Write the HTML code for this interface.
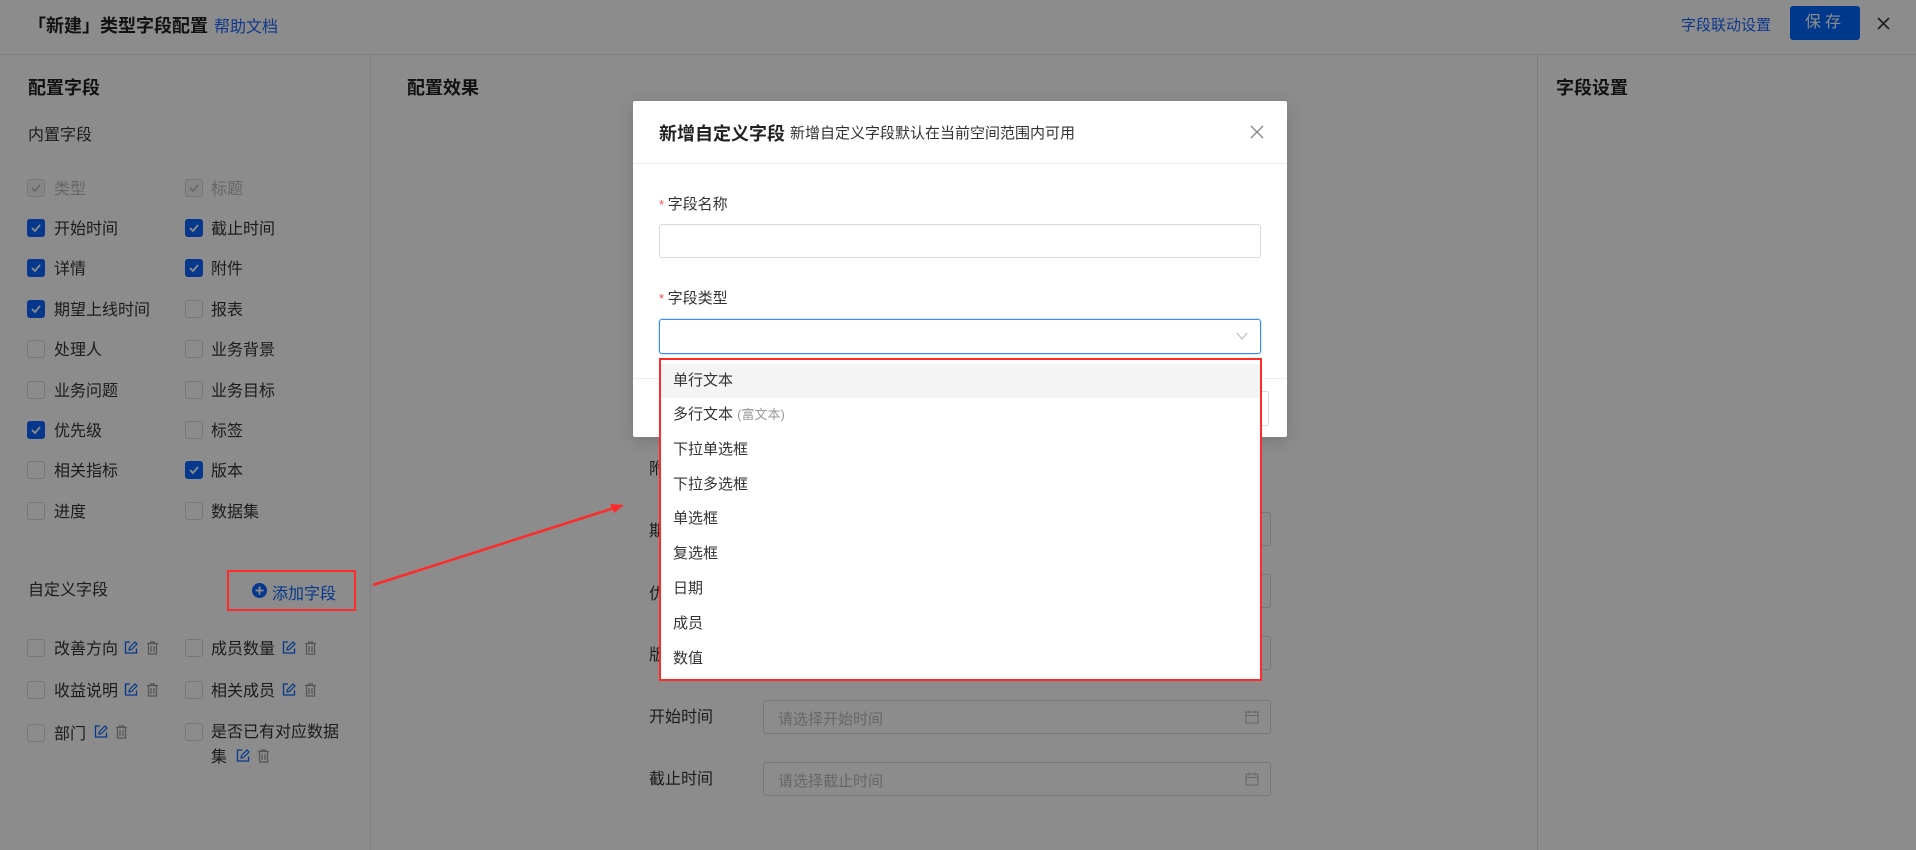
<!DOCTYPE html>
<html><head><meta charset="utf-8">
<style>
*{box-sizing:border-box;margin:0;padding:0}
body{width:1916px;height:850px;overflow:hidden;background:#fff;font-family:"Liberation Sans","Noto Sans CJK SC",sans-serif;color:#333;position:relative}
.a{position:absolute;white-space:nowrap}
.cb{position:absolute;width:18px;height:18px;border:1px solid #d9d9d9;border-radius:3px;background:#fff}
.cb.on{background:#0a66ff;border-color:#0a66ff}
.cb.dis{background:#f5f5f5;border-color:#d9d9d9}
.cb svg{position:absolute;left:2px;top:2px}
.t{position:absolute;font-size:16px;line-height:20px;color:#333;margin-top:2px}
.inp{position:absolute;border:1px solid #d9d9d9;border-radius:3px;background:#fff}
.ph{position:absolute;left:14px;top:7px;font-size:15px;color:#bbb}
.ov{position:absolute;left:0;top:0;width:1916px;height:850px;background:rgba(0,0,0,.45)}
.item{position:absolute;left:12px;font-size:15px;color:#333;line-height:20px}
</style></head><body>
<!-- header -->
<div class="a" style="left:28px;top:12px;font-size:18px;font-weight:bold;color:#222">「新建」类型字段配置</div>
<div class="a" style="left:214px;top:13px;font-size:16px;color:#1a66ff">帮助文档</div>
<div class="a" style="left:1681px;top:14px;font-size:15px;color:#1a66ff">字段联动设置</div>
<div class="a" style="left:1790px;top:6px;width:70px;height:34px;background:#0066ff;border-radius:3px;color:#fff;font-size:16px;text-align:center;line-height:34px;letter-spacing:4px">保存</div>
<svg class="a" style="left:1877px;top:17px" width="13" height="13"><path d="M1 1l11 11M12 1L1 12" stroke="#333" stroke-width="1.6"/></svg>
<div class="a" style="left:0;top:54px;width:1916px;height:1px;background:#e8e8e8"></div>
<div class="a" style="left:370px;top:55px;width:1px;height:795px;background:#e8e8e8"></div>
<div class="a" style="left:1537px;top:55px;width:1px;height:795px;background:#e8e8e8"></div>
<div class="a" style="left:28px;top:74px;font-size:18px;font-weight:bold;color:#222">配置字段</div>
<div class="a" style="left:407px;top:74px;font-size:18px;font-weight:bold;color:#222">配置效果</div>
<div class="a" style="left:1556px;top:74px;font-size:18px;font-weight:bold;color:#222">字段设置</div>
<div class="a" style="left:28px;top:121px;font-size:16px;color:#333">内置字段</div>

<div class="cb dis" style="left:27px;top:179px"><svg width="12" height="12"><path d="M2 6l3 3 5-6" stroke="#bbb" stroke-width="1.6" fill="none"/></svg></div><div class="t" style="left:54px;top:178px;color:#bbb">类型</div>
<div class="cb dis" style="left:185px;top:179px"><svg width="12" height="12"><path d="M2 6l3 3 5-6" stroke="#bbb" stroke-width="1.6" fill="none"/></svg></div><div class="t" style="left:211px;top:178px;color:#bbb">标题</div>

<div class="cb on" style="left:27px;top:219px"><svg width="12" height="12"><path d="M2 6l3 3 5-6" stroke="#fff" stroke-width="1.8" fill="none"/></svg></div><div class="t" style="left:54px;top:218px">开始时间</div>
<div class="cb on" style="left:185px;top:219px"><svg width="12" height="12"><path d="M2 6l3 3 5-6" stroke="#fff" stroke-width="1.8" fill="none"/></svg></div><div class="t" style="left:211px;top:218px">截止时间</div>

<div class="cb on" style="left:27px;top:259px"><svg width="12" height="12"><path d="M2 6l3 3 5-6" stroke="#fff" stroke-width="1.8" fill="none"/></svg></div><div class="t" style="left:54px;top:258px">详情</div>
<div class="cb on" style="left:185px;top:259px"><svg width="12" height="12"><path d="M2 6l3 3 5-6" stroke="#fff" stroke-width="1.8" fill="none"/></svg></div><div class="t" style="left:211px;top:258px">附件</div>

<div class="cb on" style="left:27px;top:300px"><svg width="12" height="12"><path d="M2 6l3 3 5-6" stroke="#fff" stroke-width="1.8" fill="none"/></svg></div><div class="t" style="left:54px;top:299px">期望上线时间</div>
<div class="cb" style="left:185px;top:300px"></div><div class="t" style="left:211px;top:299px">报表</div>

<div class="cb" style="left:27px;top:340px"></div><div class="t" style="left:54px;top:339px">处理人</div>
<div class="cb" style="left:185px;top:340px"></div><div class="t" style="left:211px;top:339px">业务背景</div>

<div class="cb" style="left:27px;top:381px"></div><div class="t" style="left:54px;top:380px">业务问题</div>
<div class="cb" style="left:185px;top:381px"></div><div class="t" style="left:211px;top:380px">业务目标</div>

<div class="cb on" style="left:27px;top:421px"><svg width="12" height="12"><path d="M2 6l3 3 5-6" stroke="#fff" stroke-width="1.8" fill="none"/></svg></div><div class="t" style="left:54px;top:420px">优先级</div>
<div class="cb" style="left:185px;top:421px"></div><div class="t" style="left:211px;top:420px">标签</div>

<div class="cb" style="left:27px;top:461px"></div><div class="t" style="left:54px;top:460px">相关指标</div>
<div class="cb on" style="left:185px;top:461px"><svg width="12" height="12"><path d="M2 6l3 3 5-6" stroke="#fff" stroke-width="1.8" fill="none"/></svg></div><div class="t" style="left:211px;top:460px">版本</div>

<div class="cb" style="left:27px;top:502px"></div><div class="t" style="left:54px;top:501px">进度</div>
<div class="cb" style="left:185px;top:502px"></div><div class="t" style="left:211px;top:501px">数据集</div>

<div class="t" style="left:28px;top:579px">自定义字段</div>
<div class="a" style="left:252px;top:583px;width:15px;height:15px;border-radius:50%;background:#0a66ff"><svg class="a" style="left:3px;top:3px" width="9" height="9"><path d="M4.5 0.5v8M0.5 4.5h8" stroke="#fff" stroke-width="1.8"/></svg></div>
<div class="a" style="left:272px;top:580px;font-size:16px;color:#0a66ff">添加字段</div>

<svg width="0" height="0" style="position:absolute"><defs>
<g id="ed"><path d="M7 2H2.5v11h11V8.5" stroke="#0a66ff" stroke-width="1.3" fill="none"/><path d="M6 10l.5-2.5L12 2l2 2-5.5 5.5z" stroke="#0a66ff" stroke-width="1.2" fill="none"/></g>
<g id="tr"><path d="M2 3.5h11M5.5 3.5V2h4v1.5M3.5 3.5V14h8V3.5M6 6v6M9 6v6" stroke="#999" stroke-width="1.2" fill="none"/></g>
</defs></svg>
<div class="cb" style="left:27px;top:639px"></div><div class="t" style="left:54px;top:638px">改善方向</div>
<svg class="a" style="left:123px;top:640px" width="16" height="16"><use href="#ed"/></svg><svg class="a" style="left:145px;top:640px" width="16" height="16"><use href="#tr"/></svg>
<div class="cb" style="left:185px;top:639px"></div><div class="t" style="left:211px;top:638px">成员数量</div>
<svg class="a" style="left:281px;top:640px" width="16" height="16"><use href="#ed"/></svg><svg class="a" style="left:303px;top:640px" width="16" height="16"><use href="#tr"/></svg>

<div class="cb" style="left:27px;top:681px"></div><div class="t" style="left:54px;top:680px">收益说明</div>
<svg class="a" style="left:123px;top:682px" width="16" height="16"><use href="#ed"/></svg><svg class="a" style="left:145px;top:682px" width="16" height="16"><use href="#tr"/></svg>
<div class="cb" style="left:185px;top:681px"></div><div class="t" style="left:211px;top:680px">相关成员</div>
<svg class="a" style="left:281px;top:682px" width="16" height="16"><use href="#ed"/></svg><svg class="a" style="left:303px;top:682px" width="16" height="16"><use href="#tr"/></svg>

<div class="cb" style="left:27px;top:724px"></div><div class="t" style="left:54px;top:723px">部门</div>
<svg class="a" style="left:93px;top:724px" width="16" height="16"><use href="#ed"/></svg><svg class="a" style="left:114px;top:724px" width="16" height="16"><use href="#tr"/></svg>
<div class="cb" style="left:185px;top:723px"></div><div class="t" style="left:211px;top:721px">是否已有对应数据</div>
<div class="t" style="left:211px;top:746px">集</div>
<svg class="a" style="left:235px;top:748px" width="16" height="16"><use href="#ed"/></svg><svg class="a" style="left:256px;top:748px" width="16" height="16"><use href="#tr"/></svg>

<!-- behind form -->
<div class="t" style="left:649px;top:458px">附件</div>
<div class="t" style="left:649px;top:520px">期望上线时间</div>
<div class="inp" style="left:763px;top:512px;width:508px;height:34px"></div>
<div class="t" style="left:649px;top:583px">优先级</div>
<div class="inp" style="left:763px;top:574px;width:508px;height:34px"></div>
<div class="t" style="left:649px;top:644px">版本</div>
<div class="inp" style="left:763px;top:636px;width:508px;height:34px"></div>
<div class="t" style="left:649px;top:706px">开始时间</div>
<div class="inp" style="left:763px;top:700px;width:508px;height:34px"><div class="ph">请选择开始时间</div><svg class="a" style="left:481px;top:9px" width="14" height="14"><rect x="1" y="2" width="12" height="11" stroke="#bbb" fill="none"/><path d="M1 5.5h12M4 0.5v3M10 0.5v3" stroke="#bbb"/></svg></div>
<div class="t" style="left:649px;top:768px">截止时间</div>
<div class="inp" style="left:763px;top:762px;width:508px;height:34px"><div class="ph">请选择截止时间</div><svg class="a" style="left:481px;top:9px" width="14" height="14"><rect x="1" y="2" width="12" height="11" stroke="#bbb" fill="none"/><path d="M1 5.5h12M4 0.5v3M10 0.5v3" stroke="#bbb"/></svg></div>

<div class="ov"></div>

<!-- red annotations above overlay -->
<div class="a" style="left:227px;top:570px;width:129px;height:41px;border:2px solid #ff2a2a"></div>
<svg class="a" style="left:0;top:0" width="1916" height="850"><path d="M373 585L614 508" stroke="#ff2a2a" stroke-width="2.5"/><path d="M624 505l-14 -1 4 9z" fill="#ff2a2a"/></svg>

<!-- modal -->
<div class="a" style="left:633px;top:101px;width:654px;height:336px;background:#fff;border-radius:2px;box-shadow:0 4px 16px rgba(0,0,0,.15)">
  <div class="a" style="left:26px;top:19px;font-size:18px;font-weight:bold;color:#222">新增自定义字段</div>
  <div class="a" style="left:157px;top:21px;font-size:15px;color:#333">新增自定义字段默认在当前空间范围内可用</div>
  <svg class="a" style="left:617px;top:24px" width="14" height="14"><path d="M1 1l12 12M13 1L1 13" stroke="#888" stroke-width="1.4"/></svg>
  <div class="a" style="left:0;top:62px;width:654px;height:1px;background:#eee"></div>
  <div class="a" style="left:26px;top:92px;font-size:15px;color:#333"><span style="color:#ff4d4f;font-size:13px">* </span>字段名称</div>
  <div class="inp" style="left:26px;top:123px;width:602px;height:34px"></div>
  <div class="a" style="left:26px;top:186px;font-size:15px;color:#333"><span style="color:#ff4d4f;font-size:13px">* </span>字段类型</div>
  <div class="inp" style="left:26px;top:218px;width:602px;height:35px;border-color:#3c8bff;box-shadow:0 0 0 1px rgba(60,139,255,.2)"><svg class="a" style="left:576px;top:12px" width="12" height="9"><path d="M1 1l5 6 5-6" stroke="#bbb" stroke-width="1.2" fill="none"/></svg></div>
  <div class="a" style="left:0;top:277px;width:654px;height:1px;background:#eee"></div>
  <div class="inp" style="left:560px;top:290px;width:76px;height:35px"></div>
</div>

<!-- dropdown -->
<div class="a" style="left:659px;top:358px;width:603px;height:323px;background:#fff;border:2px solid #ff2a2a">
  <div class="a" style="left:0;top:4px;width:599px;height:34px;background:#f4f4f4"></div>
  <div class="item" style="top:11px">单行文本</div>
  <div class="item" style="top:45px">多行文本 <span style="font-size:13px;color:#999">(富文本)</span></div>
  <div class="item" style="top:80px">下拉单选框</div>
  <div class="item" style="top:115px">下拉多选框</div>
  <div class="item" style="top:149px">单选框</div>
  <div class="item" style="top:184px">复选框</div>
  <div class="item" style="top:219px">日期</div>
  <div class="item" style="top:254px">成员</div>
  <div class="item" style="top:289px">数值</div>
</div>
</body></html>
